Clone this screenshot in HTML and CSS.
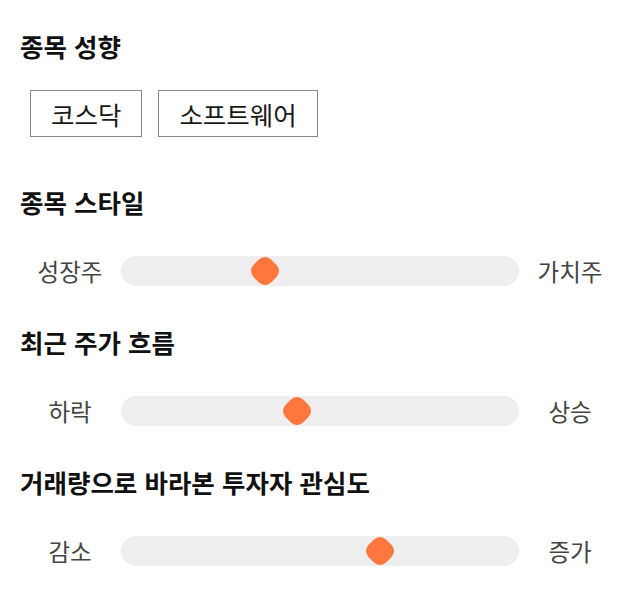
FILE: index.html
```html
<!DOCTYPE html>
<html lang="ko">
<head>
    <meta charset="UTF-8">
    <meta name="viewport" content="width=device-width, initial-scale=1.0">
    <title>종목 분석</title>
    <link rel="stylesheet" href="styles.css">
</head>
<body>
    <div class="stock-profile">
        <section class="profile-section">
            <h2 class="section-title">종목 성향</h2>
            <div class="tag-list">
                <span class="tag">코스닥</span>
                <span class="tag">소프트웨어</span>
            </div>
        </section>

        <section class="profile-section">
            <h2 class="section-title">종목 스타일</h2>
            <div class="scale-row">
                <span class="scale-label">성장주</span>
                <div class="scale-track">
                    <span class="scale-thumb" style="left: 36.25%"></span>
                </div>
                <span class="scale-label">가치주</span>
            </div>
        </section>

        <section class="profile-section">
            <h2 class="section-title">최근 주가 흐름</h2>
            <div class="scale-row">
                <span class="scale-label">하락</span>
                <div class="scale-track">
                    <span class="scale-thumb" style="left: 44.25%"></span>
                </div>
                <span class="scale-label">상승</span>
            </div>
        </section>

        <section class="profile-section">
            <h2 class="section-title">거래량으로 바라본 투자자 관심도</h2>
            <div class="scale-row">
                <span class="scale-label">감소</span>
                <div class="scale-track">
                    <span class="scale-thumb" style="left: 65%"></span>
                </div>
                <span class="scale-label">증가</span>
            </div>
        </section>
    </div>
</body>
</html>
```

FILE: styles.css
```css
body {
    margin: 0;
    background: #fff;
    font-family: "Noto Sans CJK KR", "Noto Sans", sans-serif;
}

.stock-profile {
    padding: 30px 20px 0;
}

.profile-section {
    margin-bottom: 30px;
}

.section-title {
    margin: 0 0 28px;
    font-size: 25.5px;
    line-height: 32px;
    font-weight: bold;
    color: #111;
}

/* tags */
.tag-list {
    display: flex;
    gap: 16px;
    padding: 0 10px 19px;
}

.tag {
    display: flex;
    align-items: center;
    height: 47px;
    padding: 0 20px;
    border: 1px solid #888;
    box-sizing: border-box;
    font-size: 25.5px;
    line-height: 30px;
    color: #1a1a1a;
}

/* sliders */
.scale-row {
    display: grid;
    grid-template-columns: 100px 1fr 100px;
    align-items: center;
    padding: 10px 0;
}

.scale-label {
    text-align: center;
    font-size: 23.5px;
    line-height: 30px;
    color: #444;
}

.scale-track {
    position: relative;
    height: 30px;
    margin: 0 1px;
    border-radius: 15px;
    background-color: #eee;
}

.scale-thumb {
    position: absolute;
    top: 50%;
    width: 25px;
    height: 25px;
    border-radius: 9px;
    background-color: #ff773d;
    transform: translate(-50%, -50%) rotate(45deg);
}
```
